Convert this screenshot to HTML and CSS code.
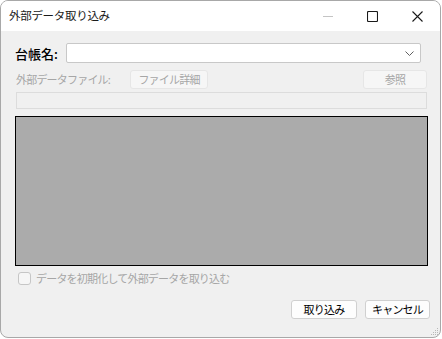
FILE: index.html
```html
<!DOCTYPE html>
<html lang="ja">
<head>
  <meta charset="UTF-8" />
  <title>外部データ取り込み</title>
  <link rel="stylesheet" href="styles.css">
</head>
<body>

  <div class="dialog">
    <div class="titlebar">
      <div class="title">外部データ取り込み</div>
      <div class="controls">
        <span class="ctl">
          <svg width="10" height="10" viewBox="0 0 10 10"><path d="M0 5.5h10" stroke="#c4c4c4" stroke-width="1"/></svg>
        </span>
        <span class="ctl">
          <svg width="11" height="11" viewBox="0 0 11 11"><rect x="0.5" y="0.5" width="10" height="10" rx="1" fill="none" stroke="#1a1a1a" stroke-width="1.1"/></svg>
        </span>
        <span class="ctl">
          <svg width="11" height="11" viewBox="0 0 11 11"><path d="M0.5 0.5l10 10M10.5 0.5l-10 10" stroke="#1a1a1a" stroke-width="1.1"/></svg>
        </span>
      </div>
    </div>

    <div class="content">
      <div class="row ledger">
        <label class="label strong">台帳名:</label>
        <div class="combo">
          <svg class="chevron" width="9" height="5" viewBox="0 0 9 5"><path d="M0.5 0.5l4 4 4-4" fill="none" stroke="#606060" stroke-width="1"/></svg>
        </div>
      </div>

      <div class="row file">
        <span class="label disabled file-label">外部データファイル:</span>
        <button class="btn off detail">ファイル詳細</button>
        <button class="btn off browse">参照</button>
      </div>

      <div class="path-field"></div>

      <div class="preview"></div>

      <div class="check-row">
        <span class="checkbox"></span>
        <span class="disabled">データを初期化して外部データを取り込む</span>
      </div>

      <div class="actions">
        <button class="btn import">取り込み</button>
        <button class="btn cancel">キャンセル</button>
      </div>

      <svg class="grip" width="8" height="8" viewBox="0 0 8 8">
        <g fill="#b8b8b8">
          <rect x="6" y="0" width="1" height="1"/>
          <rect x="4" y="2" width="1" height="1"/><rect x="6" y="2" width="1" height="1"/>
          <rect x="2" y="4" width="1" height="1"/><rect x="4" y="4" width="1" height="1"/><rect x="6" y="4" width="1" height="1"/>
          <rect x="0" y="6" width="1" height="1"/><rect x="2" y="6" width="1" height="1"/><rect x="4" y="6" width="1" height="1"/><rect x="6" y="6" width="1" height="1"/>
        </g>
      </svg>
    </div>
  </div>

</body>
</html>
```

FILE: styles.css
```css
body {
  margin: 0;
  background-color: #fff;
  font-family: "Noto Sans CJK JP", "Noto Sans", sans-serif;
  font-size: 11px;
  letter-spacing: -0.8px;
  color: #000;
}

.dialog {
  width: 441px;
  height: 338px;
  box-sizing: border-box;
  border: 1px solid #a8a8a8;
  border-radius: 8px;
  overflow: hidden;
  background-color: #f0f0f0;
  display: flex;
  flex-direction: column;
}

.titlebar {
  height: 30px;
  background-color: #fff;
  display: flex;
  align-items: center;
  padding-left: 8px;
}

.title {
  font-size: 11.5px;
  letter-spacing: -0.3px;
  color: #1a1a1a;
  line-height: 1;
}

.controls {
  margin-left: auto;
  display: flex;
  height: 100%;
}

.ctl {
  width: 45px;
  display: flex;
  align-items: center;
  justify-content: center;
}

.content {
  position: relative;
  flex: 1;
  padding: 12px 0 0 14px;
  display: flex;
  flex-direction: column;
}

.row {
  display: flex;
  align-items: center;
}

.ledger {
  height: 20px;
}

.label {
  line-height: 1;
  white-space: nowrap;
}

.strong {
  width: 51px;
  font-size: 13px;
  letter-spacing: 0;
  font-weight: 500;
  color: #000;
}

.combo {
  position: relative;
  width: 355px;
  height: 20px;
  box-sizing: border-box;
  background-color: #fff;
  border: 1px solid #c8c8c8;
  border-radius: 2px;
}

.chevron {
  position: absolute;
  right: 6px;
  top: 7px;
}

.file {
  margin-top: 7px;
  height: 19px;
  padding-left: 1px;
}

.file-label {
  width: 114px;
}

.disabled {
  color: #a6a6a6;
}

.btn {
  height: 19px;
  box-sizing: border-box;
  padding: 0;
  font-family: inherit;
  font-size: 11px;
  letter-spacing: -0.8px;
  line-height: 1;
  background-color: #fdfdfd;
  border: 1px solid #d0d0d0;
  border-radius: 3px;
  color: #000;
}

.btn.off {
  background-color: #f6f6f6;
  border-color: #e6e6e6;
  color: #a6a6a6;
}

.detail {
  width: 78px;
}

.browse {
  width: 64px;
  margin-left: 155px;
}

.path-field {
  margin: 3px 0 0 1px;
  width: 411px;
  height: 17px;
  box-sizing: border-box;
  border: 1px solid #dcdcdc;
  background-color: #f0f0f0;
}

.preview {
  margin-top: 7px;
  width: 413px;
  height: 150px;
  box-sizing: border-box;
  border: 1px solid #000;
  background-color: #ababab;
}

.check-row {
  margin: 6px 0 0 3px;
  height: 13px;
  display: flex;
  align-items: center;
  gap: 5px;
  line-height: 1;
}

.checkbox {
  width: 13px;
  height: 13px;
  box-sizing: border-box;
  border: 1px solid #c6c6c6;
  border-radius: 3px;
  background-color: #f6f6f6;
}

.actions {
  margin-top: 15px;
  padding-right: 10px;
  display: flex;
  justify-content: flex-end;
  gap: 8px;
}

.import {
  width: 66px;
}

.cancel {
  width: 65px;
}

.grip {
  position: absolute;
  right: 1px;
  bottom: 1px;
}
```
